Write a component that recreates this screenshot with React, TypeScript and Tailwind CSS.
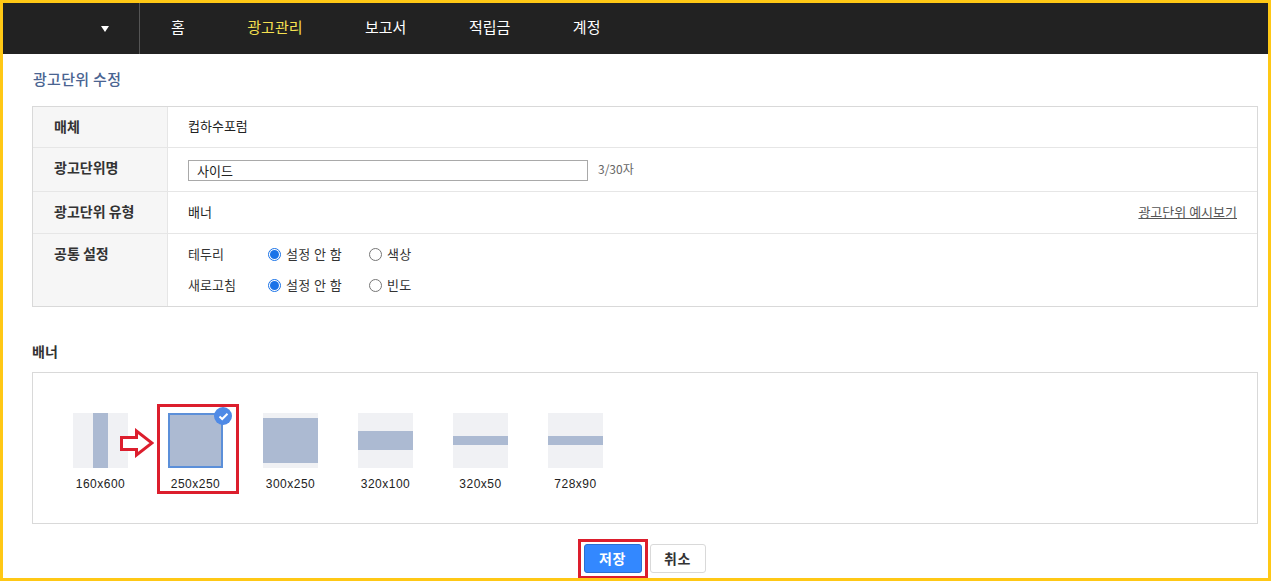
const font = "font-['Noto_Sans_CJK_KR','Liberation_Sans',sans-serif]";

function Radio({ checked, label }: { checked?: boolean; label: string }) {
  return (
    <label className="flex items-center gap-[5px]">
      {checked ? (
        <span className="w-[13px] h-[13px] rounded-full border border-[#1a73e8] flex items-center justify-center">
          <span className="w-[9px] h-[9px] rounded-full bg-[#1a73e8]" />
        </span>
      ) : (
        <span className="w-[13px] h-[13px] rounded-full border border-[#767676] bg-white" />
      )}
      <span className="mb-[2px] text-[13px] leading-[16px] tracking-[0.4px] text-[#333]">{label}</span>
    </label>
  );
}

function Row({ head, children, className = "" }: { head: string; children: React.ReactNode; className?: string }) {
  return (
    <div className={`flex border-b border-[#e6e6e6] last:border-b-0 ${className}`}>
      <div className="w-[135px] shrink-0 bg-[#f6f6f6] border-r border-[#e6e6e6] pl-[21px] text-[14px] leading-[20px] font-bold text-[#333] flex items-start pt-[9px]">
        {head}
      </div>
      <div className="flex-1 pl-[20px] pr-[20px] flex items-center text-[13px] text-[#222]">{children}</div>
    </div>
  );
}

function Thumb({ label, bar, selected }: { label: string; bar?: string; selected?: boolean }) {
  return (
    <div className="w-[55px] flex flex-col items-center relative">
      {selected ? (
        <div className="w-[55px] h-[55px] border-2 border-[#5b8fd9] bg-[#acbad2]" />
      ) : (
        <div className="w-[55px] h-[55px] flex items-center justify-center bg-[#f0f1f4]">
          <div className={`bg-[#acbad2] ${bar}`} />
        </div>
      )}
      {selected && (
        <span className="absolute -top-[6px] -right-[9px] w-[18px] h-[18px] rounded-full bg-[#4f8ae6] flex items-center justify-center">
          <svg width="11" height="9" viewBox="0 0 11 9" fill="none">
            <path d="M1.5 4.5 L4.2 7 L9.5 1.8" stroke="#fff" strokeWidth="2" />
          </svg>
        </span>
      )}
      <span className="mt-[8px] text-[12px] leading-[16px] whitespace-nowrap text-[#222] font-['Liberation_Sans',sans-serif] tracking-[0.5px]">{label}</span>
    </div>
  );
}

export default function App() {
  return (
    <div className={`w-[1271px] h-[581px] overflow-hidden bg-white border-[3px] border-[#ffc815] ${font}`}>
      <nav className="h-[51px] bg-[#222222] flex text-white text-[15px]">
        <div className="w-[137px] border-r border-[#555] flex items-center justify-end pr-[30px]">
          <span className="w-0 h-0 border-l-[4px] border-r-[4px] border-t-[6px] border-l-transparent border-r-transparent border-t-white" />
        </div>
        <div className="flex items-center pl-[31px] gap-[62.5px] pb-[2px]">
          <span>홈</span>
          <span className="text-[#f5e050]">광고관리</span>
          <span>보고서</span>
          <span>적립금</span>
          <span>계정</span>
        </div>
      </nav>
      <main className="pl-[29px] pr-[10px]">
        <h1 className="mt-[15px] ml-[1px] h-[22px] text-[15px] leading-[20px] tracking-[0.3px] font-medium text-[#4a6491]">광고단위 수정</h1>
        <section className="mt-[15px] border border-[#d9d9d9] w-[1226px]">
          <Row head="매체" className="h-[41px]"><span className="mb-[2px]">컵하수포럼</span></Row>
          <Row head="광고단위명" className="h-[44px]">
            <div className="w-[400px] h-[21px] mt-[1px] border border-[#a9a9a9] px-[8px] text-[13px] leading-[19px] text-[#222]">사이드</div>
            <span className="ml-[10px] mb-[1px] text-[12px] text-[#666]">3/30자</span>
          </Row>
          <Row head="광고단위 유형" className="h-[42px]">
            <span className="mb-[2px]">배너</span>
            <a className="ml-auto mb-[2px] text-[#555] underline">광고단위 예시보기</a>
          </Row>
          <Row head="공통 설정" className="h-[72px]">
            <div className="flex flex-col gap-[13px]">
              <div className="flex items-center">
                <span className="w-[80px] mb-[2px] leading-[16px] text-[#333]">테두리</span>
                <div className="w-[101px]"><Radio checked label="설정 안 함" /></div>
                <Radio label="색상" />
              </div>
              <div className="flex items-center">
                <span className="w-[80px] mb-[2px] leading-[16px] text-[#333]">새로고침</span>
                <div className="w-[101px]"><Radio checked label="설정 안 함" /></div>
                <Radio label="빈도" />
              </div>
            </div>
          </Row>
        </section>
        <h2 className="mt-[34px] h-[20px] text-[14px] leading-[20px] font-bold text-[#333]">배너</h2>
        <section className="mt-[11px] w-[1226px] h-[152px] border border-[#d9d9d9] pl-[40px] pt-[40px] flex gap-[40px]">
          <Thumb label="160x600" bar="w-[15px] h-full" />
          <div className="relative">
            <Thumb label="250x250" selected />
            <div className="absolute -left-[11px] -top-[9px] w-[82px] h-[90px] border-[3px] border-[#dc1e2d]" />
            <svg className="absolute -left-[48px] top-[15px]" width="34" height="30" viewBox="0 0 34 30" fill="none">
              <path d="M1.5 9.5 H16.5 V3 L32 15 L16.5 27 V21.5 H1.5 Z" fill="#fff" stroke="#dc1e2d" strokeWidth="3" />
            </svg>
          </div>
          <Thumb label="300x250" bar="w-full h-[45px]" />
          <Thumb label="320x100" bar="w-full h-[19px]" />
          <Thumb label="320x50" bar="w-full h-[9px]" />
          <Thumb label="728x90" bar="w-full h-[9px]" />
        </section>
        <div className="mt-[20px] flex justify-center gap-[8px] pr-[1px]">
          <div className="relative">
            <button className="w-[58px] h-[29px] rounded-[3px] bg-[#3388ff] border border-[#2a6fd0] text-white text-[14px] font-bold tracking-[0.5px]">저장</button>
            <div className="absolute -left-[6px] -top-[5px] w-[70px] h-[40px] border-[3px] border-[#dc1e2d]" />
          </div>
          <button className="w-[56px] h-[29px] rounded-[3px] bg-white border border-[#d9d9d9] text-[#333] text-[14px] font-bold tracking-[0.5px]">취소</button>
        </div>
      </main>
    </div>
  );
}
